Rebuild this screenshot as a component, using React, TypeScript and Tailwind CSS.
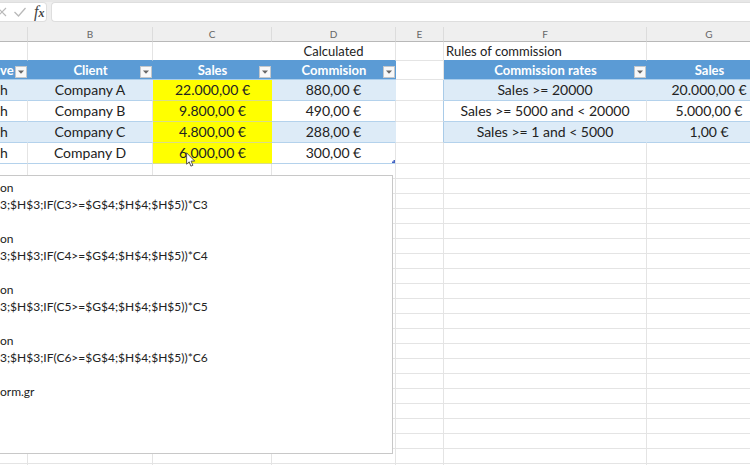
import React from 'react';
import { clsx } from 'clsx';

const SALES_ROWS = [
  { rep: 'h', client: 'Company A', sales: '22.000,00 €', commission: '880,00 €' },
  { rep: 'h', client: 'Company B', sales: '9.800,00 €', commission: '490,00 €' },
  { rep: 'h', client: 'Company C', sales: '4.800,00 €', commission: '288,00 €' },
  { rep: 'h', client: 'Company D', sales: '6.000,00 €', commission: '300,00 €' },
];

const RATE_ROWS = [
  { rule: 'Sales >= 20000', sales: '20.000,00 €' },
  { rule: 'Sales >= 5000 and < 20000', sales: '5.000,00 €' },
  { rule: 'Sales >= 1 and < 5000', sales: '1,00 €' },
];

const COLUMNS = ['', 'B', 'C', 'D', 'E', 'F', 'G'];

const NOTES = [
  'on',
  '3;$H$3;IF(C3>=$G$4;$H$4;$H$5))*C3',
  '',
  'on',
  '3;$H$3;IF(C4>=$G$4;$H$4;$H$5))*C4',
  '',
  'on',
  '3;$H$3;IF(C5>=$G$4;$H$4;$H$5))*C5',
  '',
  'on',
  '3;$H$3;IF(C6>=$G$4;$H$4;$H$5))*C6',
  '',
  'orm.gr',
];

const GRID = 'border-r border-b border-[#e4e4e4]';
const HEAD = 'relative bg-[#5b9bd5] border-b border-[#a9cdec] text-white text-[13px] font-bold';

const FilterButton: React.FC<{ label: string }> = ({ label }) => (
  <button
    aria-label={`Filter ${label}`}
    className="absolute right-px bottom-px flex size-3 items-center justify-center border border-[#c3c7cb] bg-[#f8f8f8]"
  >
    <svg width="6" height="4" viewBox="0 0 6 4">
      <path d="M0 .5h6L3 3.7z" fill="#666" />
    </svg>
  </button>
);

const FormulaBar = () => (
  <div className="flex h-[27px] gap-1 border-t-2 border-[#e7e7e7] bg-[#efefef] pb-[5px]">
    <div className="flex w-[47px] shrink-0 items-center rounded-r-sm border border-l-0 border-[#dedede] bg-white">
      <button aria-label="Cancel" className="w-[7px]">
        <svg width="7" height="10" viewBox="0 0 7 10" stroke="#b9b9b9" strokeWidth="1.2">
          <path d="M-2 1l8 8M6 1l-8 8" />
        </svg>
      </button>
      <button aria-label="Enter" className="ml-[7px] w-3">
        <svg width="12" height="10" viewBox="0 0 12 10" fill="none" stroke="#b9b9b9" strokeWidth="1.3">
          <path d="M.5 5l4 4L11.5 1" />
        </svg>
      </button>
      <button aria-label="Insert function" className="ml-2 font-['Liberation_Serif',serif] text-base leading-4 text-[#444] italic">
        f<span className="text-xs font-bold">x</span>
      </button>
    </div>
    <input
      aria-label="Formula bar"
      className="min-w-0 grow rounded-l-sm border border-r-0 border-[#dedede] bg-white px-2 text-xs outline-none"
    />
  </div>
);

const Sheet = () => (
  <table className="w-full min-w-[772px] table-fixed border-separate border-spacing-0 text-center whitespace-nowrap">
    <colgroup>
      <col className="w-7" />
      <col className="w-[125px]" />
      <col className="w-[119px]" />
      <col className="w-[124px]" />
      <col className="w-12" />
      <col className="w-[203px]" />
      <col />
    </colgroup>
    <thead>
      <tr className="h-[15px] bg-[#efefef] text-[10px] leading-[14px] text-[#666]">
        {COLUMNS.map((name, i) => (
          <th key={i} scope="col" className="border-r border-b border-r-[#dcdcdc] border-b-[#b8b8b8] p-0 font-normal">
            {name}
          </th>
        ))}
      </tr>
    </thead>
    <tbody className="[&_td]:p-0 [&_th]:p-0">
      <tr className="h-[19px] text-[13px] leading-[18px]">
        <td className="border-r border-b border-r-[#e4e4e4] border-b-[#5b9bd5]" />
        <td className="border-r border-b border-r-[#e4e4e4] border-b-[#5b9bd5]" />
        <td className="border-b border-[#5b9bd5]" />
        <td className="border-r border-b border-r-[#e4e4e4] border-b-[#5b9bd5]">Calculated</td>
        <td className={GRID} />
        <td className="border-r border-b border-r-[#e4e4e4] border-b-[#5b9bd5] text-left">
          <span className="pl-0.5">Rules of commission</span>
        </td>
        <td className="border-b border-[#5b9bd5]" />
      </tr>
      <tr className="h-[19px] leading-[18px]">
        <th className={clsx(HEAD, 'text-left')}>
          ve
          <FilterButton label="representative" />
        </th>
        <th className={HEAD}>
          Client
          <FilterButton label="client" />
        </th>
        <th className={HEAD}>
          Sales
          <FilterButton label="sales" />
        </th>
        <th className={HEAD}>
          Commision
          <FilterButton label="commision" />
        </th>
        <td className={GRID} />
        <th className={HEAD}>
          Commission rates
          <FilterButton label="commission rates" />
        </th>
        <th className={HEAD}>Sales</th>
      </tr>
      {SALES_ROWS.map((row, i) => {
        const rate = RATE_ROWS[i];
        const banded = i % 2 === 0;
        const cell = clsx(
          'border-r border-b border-b-[#b4d2ec]',
          banded ? 'border-r-[#ddebf7] bg-[#ddebf7]' : 'border-r-[#e4e4e4] bg-white'
        );
        return (
          <tr key={row.client} className="h-[21px] text-sm leading-5">
            <td className={clsx(cell, 'text-left')}>{row.rep}</td>
            <td className={cell}>{row.client}</td>
            <td className="border-b border-[#d9dd88] bg-[#ffff00]">{row.sales}</td>
            <td className={clsx(cell, 'relative border-r-[#a9cbe8]')}>
              {row.commission}
              {i === SALES_ROWS.length - 1 && (
                <svg className="absolute right-0 bottom-0" width="3" height="3" viewBox="0 0 3 3">
                  <path d="M3 0v3H0V1.5h1.5V0z" fill="#4463c4" />
                </svg>
              )}
            </td>
            <td className={clsx(GRID, rate && 'border-r-[#a9cbe8]')} />
            <td className={rate ? cell : GRID}>{rate?.rule}</td>
            <td className={rate ? cell : GRID}>{rate?.sales}</td>
          </tr>
        );
      })}
      {Array.from({ length: 21 }, (_, r) => (
        <tr key={r} className="h-[15px]">
          {COLUMNS.map((_, c) => (
            <td key={c} className={GRID} />
          ))}
        </tr>
      ))}
    </tbody>
  </table>
);

export default function App() {
  return (
    <main className="relative h-screen overflow-hidden bg-white font-['Lato',sans-serif] text-[#222]">
      <FormulaBar />
      <Sheet />

      {/* floating text box with the formulas */}
      <div className="absolute top-[175px] left-0 w-[393px] border border-l-0 border-[#c8c8c8] bg-white pt-[3px] pb-[53px] text-xs leading-[17px]">
        {NOTES.map((line, i) => (
          <p key={i} className="h-[17px]">
            {line}
          </p>
        ))}
      </div>

      {/* mouse pointer */}
      <svg className="absolute top-[152px] left-[186px]" width="10" height="16" viewBox="0 0 10 16">
        <path d="M.6.8v11.4l2.6-2.4 1.7 4.3 2-.8-1.8-4.2h3.6z" fill="#fff" stroke="#444" strokeWidth=".9" />
      </svg>
    </main>
  );
}
